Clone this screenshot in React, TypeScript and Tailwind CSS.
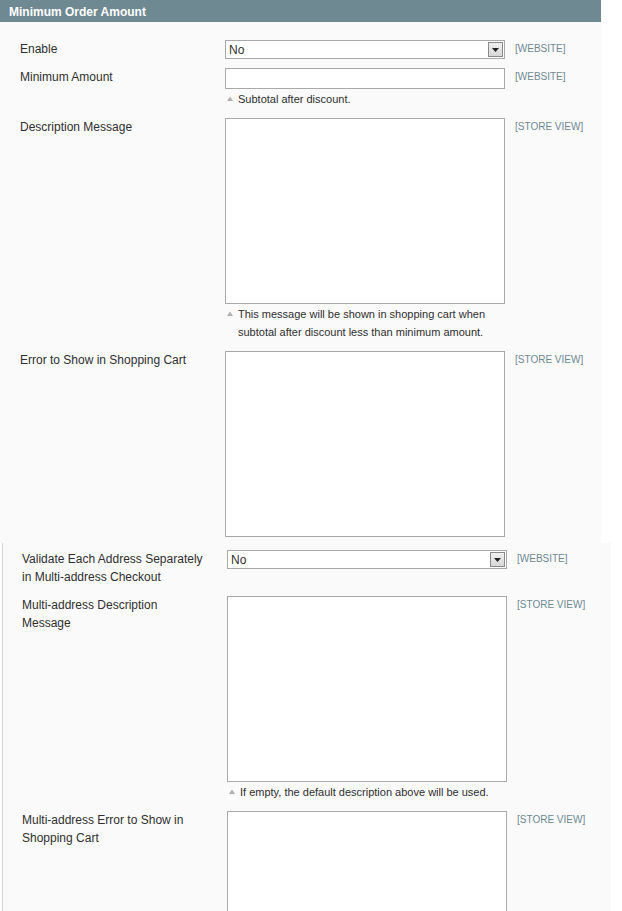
import React from "react";

const font = "font-['Liberation_Sans',Arial,sans-serif]";

const Note = ({ children }: { children: React.ReactNode }) => (
  <div className="flex items-start text-[11px] leading-[18px] text-[#2f2f2f]">
    <svg width="13" height="18" viewBox="0 0 13 18" className="shrink-0">
      <path d="M2 11 L5 6.5 L8 11 Z" fill="#b0b0b0" />
    </svg>
    <span>{children}</span>
  </div>
);

const Select = () => (
  <div className="flex h-[19px] w-[280px] items-center border border-[#a9a9a9] bg-white pl-[3px] text-[12px] text-[#2f2f2f]">
    <span className="flex-1">No</span>
    <div className="mr-[1px] flex h-[15px] w-[15px] items-center justify-center border border-[#8a8a8a] bg-gradient-to-b from-[#f0f0f0] to-[#d8d8d8]">
      <svg width="7" height="4" viewBox="0 0 7 4">
        <path d="M0 0 H7 L3.5 4 Z" fill="#222" />
      </svg>
    </div>
  </div>
);

const Box = ({ h }: { h: string }) => (
  <div className={`w-[280px] border border-[#a9a9a9] bg-white ${h}`} />
);

const Row = ({
  label,
  scope,
  children,
  className = "",
}: {
  label: React.ReactNode;
  scope: string;
  children: React.ReactNode;
  className?: string;
}) => (
  <div className={`flex items-start ${className}`}>
    <div className="w-[205px] shrink-0 pr-[20px] text-[12px] leading-[18px] text-[#2f2f2f]">
      {label}
    </div>
    <div className="w-[280px] shrink-0">{children}</div>
    <div className="ml-[10px] text-[10px] leading-[18px] text-[#6f8992]">{scope}</div>
  </div>
);

export default function App() {
  return (
    <div className={`${font} h-[911px] w-[622px] overflow-hidden bg-white`}>
      <div className="w-[601px]">
        <div className="h-[22px] bg-[#6f8992] pl-[9px] text-[12px] font-bold leading-[24px] text-white">
          Minimum Order Amount
        </div>
        <div className="bg-[#fafafa] pb-[6px] pl-[20px] pt-[18px]">
          <Row label="Enable" scope="[WEBSITE]">
            <Select />
          </Row>
          <Row label="Minimum Amount" scope="[WEBSITE]" className="mt-[9px]">
            <div className="h-[21px] w-[280px] border border-[#a9a9a9] bg-white" />
            <div className="mt-[1px]">
              <Note>Subtotal after discount.</Note>
            </div>
          </Row>
          <Row label="Description Message" scope="[STORE VIEW]" className="mt-[10px]">
            <Box h="h-[186px]" />
            <div className="mt-[1px]">
              <Note>
                This message will be shown in shopping cart when
                <br />
                subtotal after discount less than minimum amount.
              </Note>
            </div>
          </Row>
          <Row label="Error to Show in Shopping Cart" scope="[STORE VIEW]" className="mt-[10px]">
            <Box h="h-[186px]" />
          </Row>
        </div>
      </div>
      <div className="ml-[2px] w-[609px] border-l border-[#d6d6d6] bg-[#fafafa] pl-[19px] pt-[7px]">
        <Row label="Validate Each Address Separately in Multi-address Checkout" scope="[WEBSITE]">
          <Select />
        </Row>
        <Row label="Multi-address Description Message" scope="[STORE VIEW]" className="mt-[10px]">
          <Box h="h-[186px]" />
          <div className="mt-[1px]">
            <Note>If empty, the default description above will be used.</Note>
          </div>
        </Row>
        <Row label="Multi-address Error to Show in Shopping Cart" scope="[STORE VIEW]" className="mt-[10px]">
          <Box h="h-[186px]" />
        </Row>
      </div>
    </div>
  );
}
